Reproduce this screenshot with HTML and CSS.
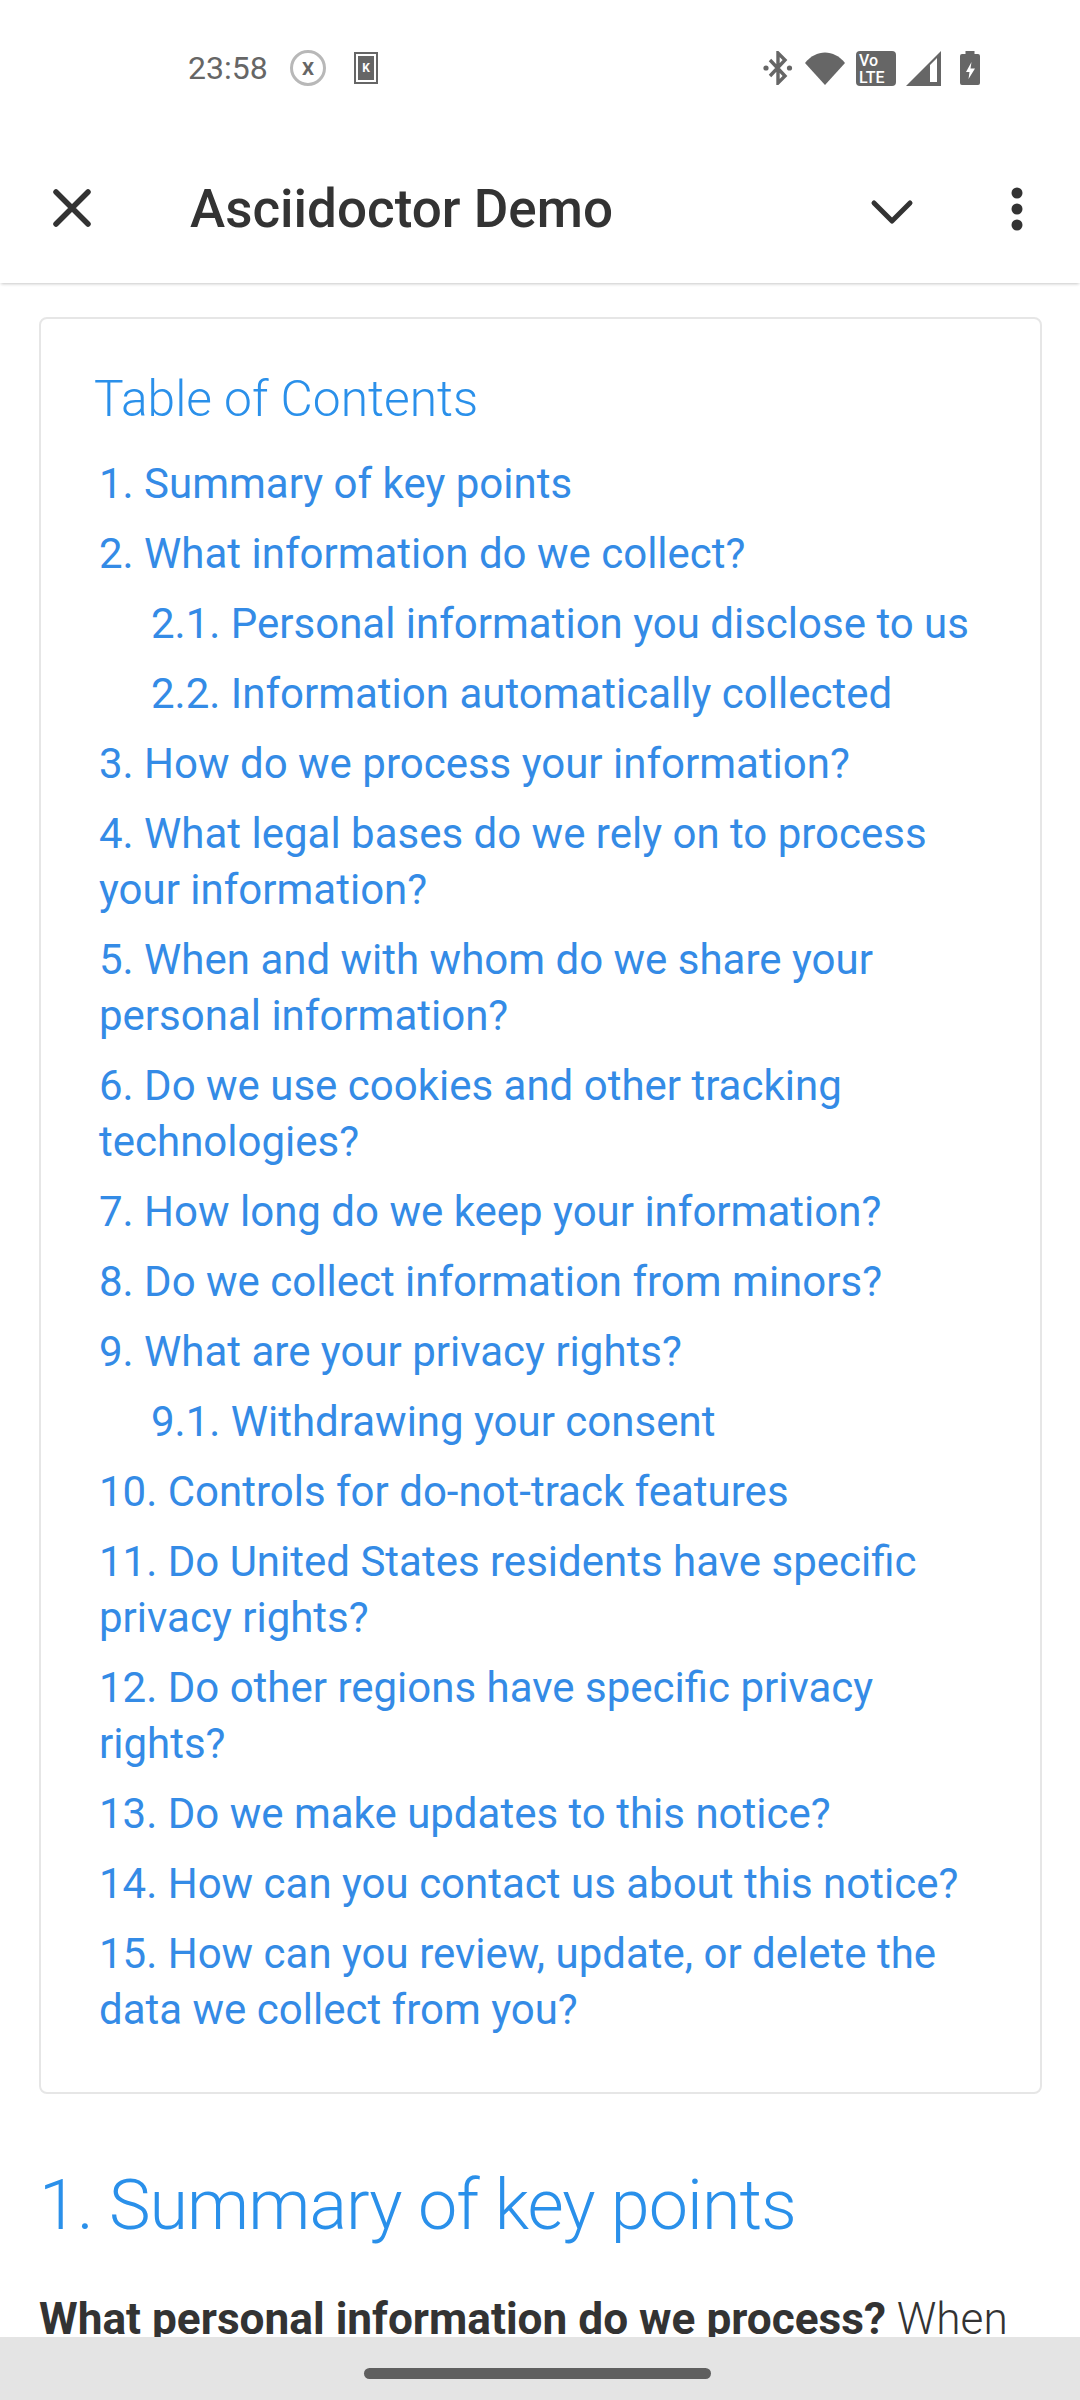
FILE: index.html
```html
<!DOCTYPE html>
<html lang="en">
<head>
    <meta charset="UTF-8">
    <meta name="viewport" content="width=device-width, initial-scale=1.0">
    <title>Asciidoctor Demo</title>
    <link rel="stylesheet" href="styles.css">
</head>
<body>
    <div class="status-bar">
        <div class="status-left">
            <span class="clock">23:58</span>
            <span class="badge-x">X</span>
            <span class="badge-k"><span>K</span></span>
        </div>
        <div class="status-right">
            <svg class="icon-bt" width="30" height="34" viewBox="0 0 30 34">
                <path d="M7 9 L22 25 L15 32 V2 L22 9 L7 25" fill="none" stroke="#666" stroke-width="3.4"/>
                <circle cx="3" cy="17" r="2.6" fill="#666"/>
                <circle cx="26.5" cy="17" r="2.6" fill="#666"/>
            </svg>
            <svg class="icon-wifi" width="40" height="33" viewBox="0 0 40 33">
                <path d="M0 11 C11 -3 29 -3 40 11 L20 33 Z" fill="#666"/>
            </svg>
            <span class="volte">Vo<br>LTE</span>
            <svg class="icon-signal" width="35" height="35" viewBox="0 0 35 35">
                <path d="M0 35 L35 0 V35 Z M24 14 V31 H31 V7 Z" fill="#666" fill-rule="evenodd"/>
            </svg>
            <svg class="icon-battery" width="20" height="34" viewBox="0 0 20 34">
                <path d="M5.5 0 H14.5 V3 H18 Q20 3 20 5 V32 Q20 34 18 34 H2 Q0 34 0 32 V5 Q0 3 2 3 H5.5 Z" fill="#666"/>
                <path d="M11.5 11 L6 21 H9.5 L8.5 28 L15 17.5 H10.5 Z" fill="#fff"/>
            </svg>
        </div>
    </div>

    <header class="toolbar">
        <svg class="close-icon" width="40" height="40" viewBox="0 0 40 40">
            <path d="M4 4 L36 36 M36 4 L4 36" fill="none" stroke="#333" stroke-width="5.5" stroke-linecap="round"/>
        </svg>
        <h1 class="page-title">Asciidoctor Demo</h1>
        <svg class="chevron-icon" width="44" height="26" viewBox="0 0 44 26">
            <path d="M4 4 L22 22 L40 4" fill="none" stroke="#333" stroke-width="5" stroke-linecap="round" stroke-linejoin="round"/>
        </svg>
        <svg class="more-icon" width="12" height="44" viewBox="0 0 12 44">
            <circle cx="6" cy="6" r="5.5" fill="#333"/>
            <circle cx="6" cy="22" r="5.5" fill="#333"/>
            <circle cx="6" cy="38" r="5.5" fill="#333"/>
        </svg>
    </header>

    <main class="content">
        <nav class="toc">
            <div class="toc-title">Table of Contents</div>
            <ul class="toc-list">
                <li><a href="#s1">1. Summary of key points</a></li>
                <li><a href="#s2">2. What information do we collect?</a></li>
                <li class="sub"><a href="#s21">2.1. Personal information you disclose to us</a></li>
                <li class="sub"><a href="#s22">2.2. Information automatically collected</a></li>
                <li><a href="#s3">3. How do we process your information?</a></li>
                <li><a href="#s4">4. What legal bases do we rely on to process your information?</a></li>
                <li><a href="#s5">5. When and with whom do we share your personal information?</a></li>
                <li><a href="#s6">6. Do we use cookies and other tracking technologies?</a></li>
                <li><a href="#s7">7. How long do we keep your information?</a></li>
                <li><a href="#s8">8. Do we collect information from minors?</a></li>
                <li><a href="#s9">9. What are your privacy rights?</a></li>
                <li class="sub"><a href="#s91">9.1. Withdrawing your consent</a></li>
                <li><a href="#s10">10. Controls for do-not-track features</a></li>
                <li><a href="#s11">11. Do United States residents have specific privacy rights?</a></li>
                <li><a href="#s12">12. Do other regions have specific privacy rights?</a></li>
                <li><a href="#s13">13. Do we make updates to this notice?</a></li>
                <li><a href="#s14">14. How can you contact us about this notice?</a></li>
                <li><a href="#s15">15. How can you review, update, or delete the data we collect from you?</a></li>
            </ul>
        </nav>
        <h2 class="section-title">1. Summary of key points</h2>
        <p class="body-text"><strong>What personal information do we process?</strong> When</p>
    </main>

    <div class="nav-bar"><div class="nav-handle"></div></div>
</body>
</html>
```

FILE: styles.css
```css
html, body {
    margin: 0;
    padding: 0;
    height: 2400px;
    overflow: hidden;
}
body {
    display: flex;
    flex-direction: column;
    font-family: Roboto, "Liberation Sans", sans-serif;
    background-color: #fff;
    color: #333;
}

/* status bar */
.status-bar {
    height: 100px;
    padding: 36px 100px 0 188px;
    box-sizing: border-box;
    display: flex;
    justify-content: space-between;
    align-items: center;
    flex-shrink: 0;
}
.status-left {
    display: flex;
    align-items: center;
}
.clock {
    font-size: 32px;
    color: #666;
    width: 102px;
}
.badge-x {
    width: 36px;
    height: 36px;
    box-sizing: border-box;
    border: 3px solid #b8b8b8;
    border-radius: 50%;
    font-size: 19px;
    font-weight: 700;
    color: #666;
    display: flex;
    align-items: center;
    justify-content: center;
}
.badge-k {
    margin-left: 28px;
    width: 24px;
    height: 32px;
    box-sizing: border-box;
    border: 2px solid #666;
    padding: 2px;
    display: flex;
}
.badge-k span {
    flex: 1;
    background-color: #666;
    color: #fff;
    font-size: 12px;
    font-weight: 700;
    display: flex;
    align-items: center;
    justify-content: center;
}
.status-right {
    display: flex;
    align-items: center;
}
.icon-wifi {
    margin-left: 12px;
}
.volte {
    margin-left: 11px;
    width: 40px;
    height: 35px;
    box-sizing: border-box;
    padding: 1px 0 0 3px;
    background-color: #666;
    border-radius: 4px;
    color: #fff;
    font-size: 16px;
    line-height: 17px;
    font-weight: 500;
}
.icon-signal {
    margin-left: 10px;
}
.icon-battery {
    margin-left: 19px;
}

/* app bar */
.toolbar {
    height: 183px;
    box-sizing: border-box;
    padding-top: 33px;
    display: flex;
    align-items: center;
    flex-shrink: 0;
    background-color: #fff;
    box-shadow: 0 2px 3px -1px rgba(0, 0, 0, 0.22);
    position: relative;
}
.close-icon {
    margin-left: 52px;
}
.page-title {
    margin: 2px 0 0 98px;
    flex: 1;
    font-size: 53px;
    font-weight: 500;
    color: #333;
}
.chevron-icon {
    margin: 8px 97px 0 0;
}
.more-icon {
    margin: 2px 57px 0 0;
}

/* page content */
.content {
    flex: 1;
    min-height: 0;
    overflow: hidden;
    padding: 34px 38px 0 39px;
}
.toc {
    border: 2px solid #e6e6e6;
    border-radius: 8px;
    padding: 51px 50px 54px 53px;
}
.toc-title {
    font-size: 49.7px;
    font-weight: 300;
    line-height: 58px;
    color: #2a90ea;
}
.toc-list {
    list-style: none;
    margin: 28px 0 0;
    padding: 0;
    display: flex;
    flex-direction: column;
    gap: 14px;
}
.toc-list li {
    font-size: 42px;
    line-height: 56px;
    padding-left: 5px;
}
.toc-list li.sub {
    padding-left: 57px;
}
.toc-list a {
    color: #348be6;
    text-decoration: none;
}
.section-title {
    margin: 69px 0 0;
    font-size: 70px;
    line-height: 84px;
    font-weight: 300;
    letter-spacing: -0.9px;
    color: #2a90ea;
}
.body-text {
    margin: 44px 0 0;
    font-size: 44.2px;
    line-height: 56px;
    font-weight: 300;
    color: #333;
}
.body-text strong {
    font-weight: 700;
}

/* gesture bar */
.nav-bar {
    height: 63px;
    flex-shrink: 0;
    background-color: #e4e4e4;
    display: flex;
    justify-content: center;
    padding: 31px 5px 0 0;
    box-sizing: border-box;
}
.nav-handle {
    width: 347px;
    height: 11px;
    border-radius: 6px;
    background-color: #5f5f5f;
}
```
